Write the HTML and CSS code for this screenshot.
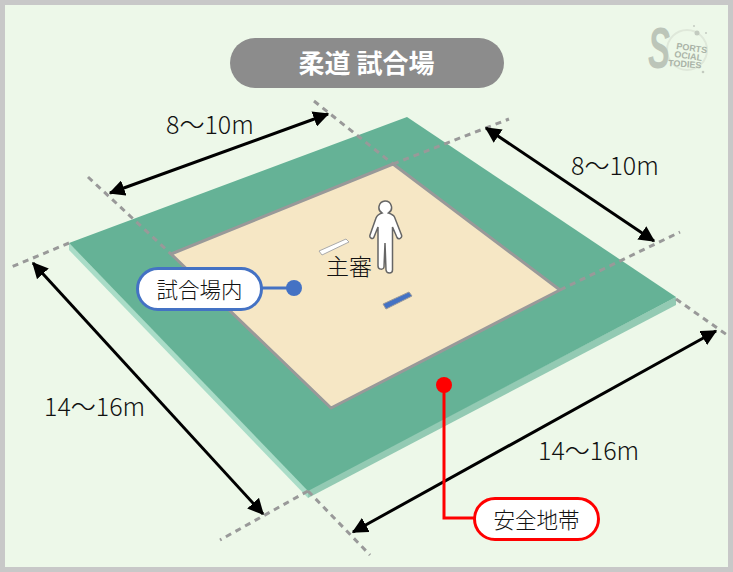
FILE: index.html
```html
<!DOCTYPE html>
<html lang="ja">
  <head>
    <meta charset="UTF-8" />
    <title>柔道 試合場</title>
    <link rel="stylesheet" href="styles.css">
  </head>
  <body>
    <div class="stage">
      <svg class="diagram" width="733" height="572" viewBox="0 0 733 572">
        <defs>
          <marker id="head" viewBox="0 0 12 12" refX="11" refY="6" markerWidth="16" markerHeight="16" markerUnits="userSpaceOnUse" orient="auto-start-reverse">
            <path d="M0 0 L12 6 L0 12 Z" fill="#000" />
          </marker>
        </defs>

        <!-- mat -->
        <polygon class="mat-side-left" points="69,243 308,490 308,498 69,250" />
        <polygon class="mat-side-right" points="308,490 676,297 676,305 308,498" />
        <polygon class="mat" points="407,117 676,297 308,491 69,243" />
        <polygon class="area" points="393,164 560,290 331,408 171,254" />

        <!-- guide lines -->
        <path class="guide" d="M314 101 L393 164" />
        <path class="guide" d="M88 177 L171 254" />
        <path class="guide" d="M393 164 L509 119" />
        <path class="guide" d="M560 290 L680 232" />
        <path class="guide" d="M69 243 L9 268" />
        <path class="guide" d="M308 491 L220 540" />
        <path class="guide" d="M308 491 L370 555" />
        <path class="guide" d="M676 299 L730 337" />

        <!-- dimensions -->
        <line class="dim" x1="110" y1="193" x2="328" y2="114" />
        <line class="dim" x1="486" y1="128" x2="654" y2="241" />
        <line class="dim" x1="33" y1="263" x2="263" y2="514" />
        <line class="dim" x1="353" y1="532" x2="716" y2="331" />
        <text class="dim-label" x="166" y="134">8～10m</text>
        <text class="dim-label" x="571" y="175">8～10m</text>
        <text class="dim-label" x="44" y="416">14～16m</text>
        <text class="dim-label" x="538" y="460">14～16m</text>

        <!-- referee and marks -->
        <polygon class="mark-white" points="319,251 346,239 349,242 322,255" />
        <polygon class="mark-blue" points="383,304 409,292 412,296 386,309" />
        <path class="person" d="M385 201 a6.500 6.500 0 0 1 3.500 12 c3 1 5 2 6 4 l7 18 c1 3 -3 5 -4.500 2.500 l-4.500 -10.500 l0 43 c0 4 -6 4 -6.500 0 l-1 -27 l-1 24 c-.5 3 -6 3 -6 -1 l0 -39 l-4 10 c-1 3 -5 1 -4 -2 l6 -17 c1 -2.500 3 -4 6 -5 a6.500 6.500 0 0 1 3 -12 z" />
        <text class="ref-label" x="326" y="275">主審</text>

        <!-- callouts -->
        <path class="lead-blue" d="M262 288 L294 288" />
        <circle class="dot-blue" cx="294" cy="288" r="8" />
        <path class="lead-red" d="M444 385 L444 518 L474 518" />
        <circle class="dot-red" cx="444" cy="385" r="8" />

        <!-- logo -->
        <g class="logo">
          <circle class="logo-ring" cx="687" cy="50" r="20" />
          <circle class="logo-spot" cx="697" cy="33" r="2.500" />
          <circle class="logo-spot" cx="706" cy="33" r="1" />
          <circle class="logo-spot" cx="694" cy="26" r="1" />
          <circle class="logo-spot" cx="703" cy="72" r="1.300" />
          <text class="logo-s" transform="translate(648 68) scale(.66 1.140)">S</text>
          <text class="logo-word" x="676" y="49" transform="rotate(8 676 49)">PORTS</text>
          <text class="logo-word" x="674" y="57" transform="rotate(8 674 57)">OCIAL</text>
          <text class="logo-word" x="668" y="66" transform="rotate(4 668 66)">TODIES</text>
        </g>
      </svg>

      <h1 class="title">柔道 試合場</h1>
      <div class="pill pill-blue">試合場内</div>
      <div class="pill pill-red">安全地帯</div>
    </div>
  </body>
</html>
```

FILE: styles.css
```css
body {
  margin: 0;
  font-family: "Noto Sans CJK JP", "Noto Sans", sans-serif;
}

.stage {
  position: relative;
  display: flex;
  justify-content: center;
  width: 733px;
  height: 572px;
  padding-top: 38px;
  box-sizing: border-box;
  background-color: #edf8e9;
  box-shadow: inset 0 0 0 5px #c8c8c8;
  overflow: hidden;
}

.diagram {
  position: absolute;
  top: 0;
  left: 0;
}

.title {
  position: relative;
  width: 274px;
  height: 50px;
  margin: 0;
  border-radius: 25px;
  background-color: #8c8c8c;
  color: #ffffff;
  font-size: 26px;
  font-weight: 700;
  line-height: 48px;
  text-align: center;
}

.pill {
  position: absolute;
  width: 127px;
  height: 44px;
  box-sizing: border-box;
  border: 3px solid;
  border-radius: 22px;
  background-color: #ffffff;
  color: #111111;
  font-size: 21.500px;
  font-weight: 300;
  line-height: 37px;
  text-align: center;
}
.pill-blue {
  left: 136px;
  top: 267px;
  border-color: #4472c4;
}
.pill-red {
  left: 473px;
  top: 497px;
  border-color: #ff0000;
}

/* mat */
.mat {
  fill: #65b296;
}
.mat-side-left {
  fill: #a9dcc7;
}
.mat-side-right {
  fill: #93cab3;
}
.area {
  fill: #f6e7c5;
  stroke: #999999;
  stroke-width: 3;
  stroke-linejoin: round;
}

/* lines */
.guide {
  fill: none;
  stroke: #999999;
  stroke-width: 3;
  stroke-dasharray: 6 5;
}
.dim {
  stroke: #000000;
  stroke-width: 3;
  marker-start: url(#head);
  marker-end: url(#head);
}
.dim-label {
  fill: #111111;
  font-size: 25px;
  font-weight: 300;
}
.ref-label {
  fill: #111111;
  font-size: 23px;
  font-weight: 300;
}

/* marks */
.mark-white {
  fill: #ffffff;
  stroke: #aaaaaa;
  stroke-width: 1;
}
.mark-blue {
  fill: #4472c4;
  stroke: #9a9a9a;
  stroke-width: 1;
}
.person {
  fill: #ffffff;
  stroke: #666666;
  stroke-width: 1.500;
}

/* callouts */
.lead-blue {
  fill: none;
  stroke: #4472c4;
  stroke-width: 3;
}
.dot-blue {
  fill: #4472c4;
}
.lead-red {
  fill: none;
  stroke: #ff0000;
  stroke-width: 3;
}
.dot-red {
  fill: #ff0000;
}

/* logo */
.logo-ring {
  fill: none;
  stroke: #dfe8da;
  stroke-width: 2;
}
.logo-spot {
  fill: #c3cbc0;
}
.logo-s {
  fill: #bcc5b9;
  font-family: "Liberation Sans", sans-serif;
  font-size: 50px;
  font-style: italic;
  font-weight: 700;
}
.logo-word {
  fill: #aab3a7;
  font-family: "Liberation Sans", sans-serif;
  font-size: 9px;
  font-weight: 700;
}
```
